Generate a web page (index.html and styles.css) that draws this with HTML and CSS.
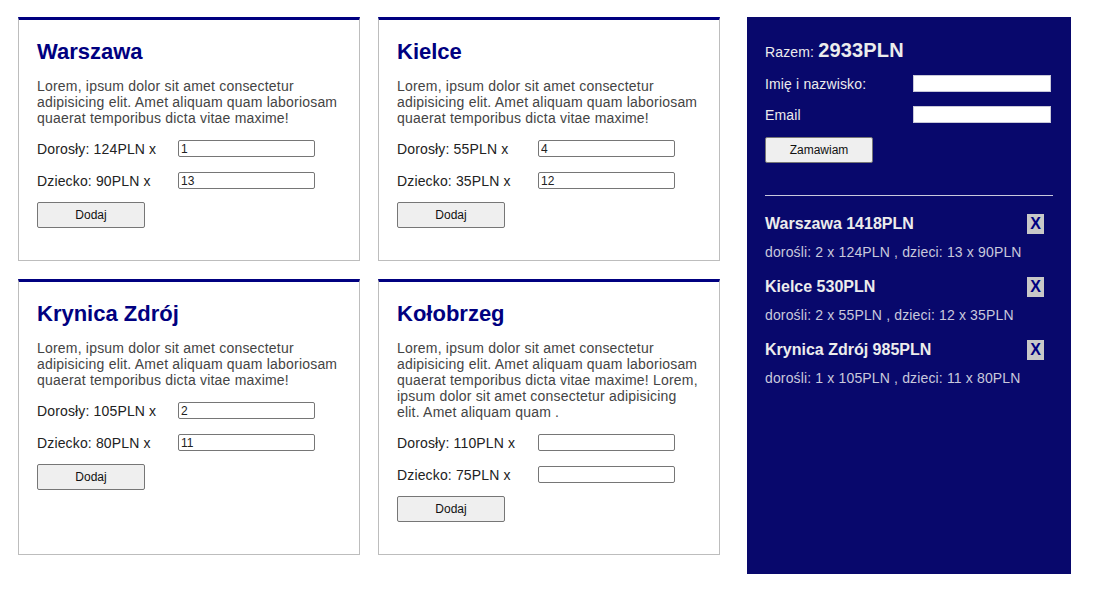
FILE: index.html
```html
<!DOCTYPE html>
<html lang="pl">
<head>
    <meta charset="UTF-8">
    <meta name="viewport" content="width=device-width, initial-scale=1.0">
    <title>Wycieczki</title>
    <link rel="stylesheet" href="styles.css">
</head>
<body>
    <div class="page">
        <div class="trips">
            <div class="trip">
                <h2>Warszawa</h2>
                <p>Lorem, ipsum dolor sit amet consectetur adipisicing elit. Amet aliquam quam laboriosam quaerat temporibus dicta vitae maxime!</p>
                <div class="fields">
                    <label class="row"><span>Dorosły: 124PLN x</span><input type="text" value="1"></label>
                    <label class="row"><span>Dziecko: 90PLN x</span><input type="text" value="13"></label>
                </div>
                <button class="btn">Dodaj</button>
            </div>

            <div class="trip">
                <h2>Kielce</h2>
                <p>Lorem, ipsum dolor sit amet consectetur adipisicing elit. Amet aliquam quam laboriosam quaerat temporibus dicta vitae maxime!</p>
                <div class="fields">
                    <label class="row"><span>Dorosły: 55PLN x</span><input type="text" value="4"></label>
                    <label class="row"><span>Dziecko: 35PLN x</span><input type="text" value="12"></label>
                </div>
                <button class="btn">Dodaj</button>
            </div>

            <div class="trip">
                <h2>Krynica Zdrój</h2>
                <p>Lorem, ipsum dolor sit amet consectetur adipisicing elit. Amet aliquam quam laboriosam quaerat temporibus dicta vitae maxime!</p>
                <div class="fields">
                    <label class="row"><span>Dorosły: 105PLN x</span><input type="text" value="2"></label>
                    <label class="row"><span>Dziecko: 80PLN x</span><input type="text" value="11"></label>
                </div>
                <button class="btn">Dodaj</button>
            </div>

            <div class="trip">
                <h2>Kołobrzeg</h2>
                <p>Lorem, ipsum dolor sit amet consectetur adipisicing elit. Amet aliquam quam laboriosam quaerat temporibus dicta vitae maxime! Lorem, ipsum dolor sit amet consectetur adipisicing elit. Amet aliquam quam .</p>
                <div class="fields">
                    <label class="row"><span>Dorosły: 110PLN x</span><input type="text" value=""></label>
                    <label class="row"><span>Dziecko: 75PLN x</span><input type="text" value=""></label>
                </div>
                <button class="btn">Dodaj</button>
            </div>
        </div>

        <aside class="cart">
            <div class="total">Razem: <strong>2933PLN</strong></div>
            <div class="fields">
                <label class="row"><span>Imię i nazwisko:</span><input type="text"></label>
                <label class="row"><span>Email</span><input type="text"></label>
            </div>
            <button class="btn">Zamawiam</button>

            <hr>

            <!-- zamówione wycieczki -->
            <div class="order">
                <div class="order-head"><span>Warszawa 1418PLN</span><button class="remove">X</button></div>
                <div class="order-info">dorośli: 2 x 124PLN , dzieci: 13 x 90PLN</div>
            </div>
            <div class="order">
                <div class="order-head"><span>Kielce 530PLN</span><button class="remove">X</button></div>
                <div class="order-info">dorośli: 2 x 55PLN , dzieci: 12 x 35PLN</div>
            </div>
            <div class="order">
                <div class="order-head"><span>Krynica Zdrój 985PLN</span><button class="remove">X</button></div>
                <div class="order-info">dorośli: 1 x 105PLN , dzieci: 11 x 80PLN</div>
            </div>
        </aside>
    </div>
</body>
</html>
```

FILE: styles.css
```css
:root {
    --navy: #000080;
    --panel: #08086c;
    --light: #ececec;
}

* {
    box-sizing: border-box;
}

body {
    margin: 0;
    font-family: 'Liberation Sans', Arial, sans-serif;
    font-size: 14px;
    letter-spacing: 0.15px;
    color: #222;
    background: #fff;
}

.page {
    display: flex;
    align-items: flex-start;
    gap: 27px;
    padding: 17px 0 0 18px;
}

.trips {
    display: grid;
    grid-template-columns: 342px 342px;
    gap: 18px;
}

.trip {
    border: 1px solid #bdbdbd;
    border-top: 3px solid var(--navy);
    padding: 19px 18px 32px;
}

.trip h2 {
    margin: 0 0 13px;
    font-size: 22px;
    letter-spacing: 0;
    color: var(--navy);
}

.trip p {
    margin: 0 0 14px;
    line-height: 16px;
    letter-spacing: 0.2px;
    color: #444;
}

.fields {
    display: flex;
    flex-direction: column;
    gap: 15px;
    margin-bottom: 13px;
}

.row {
    display: flex;
    align-items: center;
}

.row span {
    width: 141px;
}

.row input {
    width: 137px;
    height: 17px;
    padding: 0 2px;
    border: 1px solid #767676;
    border-radius: 2px;
    font-family: 'Liberation Sans', Arial, sans-serif;
    font-size: 12px;
    color: #222;
}

.btn {
    display: block;
    width: 108px;
    height: 26px;
    background: #efefef;
    border: 1px solid #767676;
    border-radius: 2px;
    font-family: 'Liberation Sans', Arial, sans-serif;
    font-size: 12px;
    color: #111;
    cursor: pointer;
}

/* koszyk */
.cart {
    width: 324px;
    min-height: 557px;
    background: var(--panel);
    color: var(--light);
    padding: 22px 18px 20px;
}

.total {
    margin-bottom: 13px;
}

.total strong {
    font-size: 20px;
}

.cart .row span {
    width: 148px;
}

.cart .row input {
    width: 138px;
    height: 17px;
    border: 1px solid #c8c8d8;
    border-radius: 0;
}

.cart .fields {
    gap: 14px;
    margin-bottom: 14px;
}

.cart hr {
    margin: 32px 0 18px;
    border: 0;
    border-top: 1px solid #c8c8dc;
}

.order {
    margin-bottom: 17px;
}

.order-head {
    display: flex;
    align-items: center;
    justify-content: space-between;
    font-size: 16px;
    font-weight: bold;
    letter-spacing: 0;
}

.remove {
    width: 17px;
    height: 20px;
    margin-right: 9px;
    padding: 0;
    border: 0;
    background: #c8c8c8;
    color: var(--navy);
    font-family: 'Liberation Sans', Arial, sans-serif;
    font-size: 16px;
    font-weight: bold;
    cursor: pointer;
}

.order-info {
    margin-top: 10px;
    color: #c8c8dc;
}
```
